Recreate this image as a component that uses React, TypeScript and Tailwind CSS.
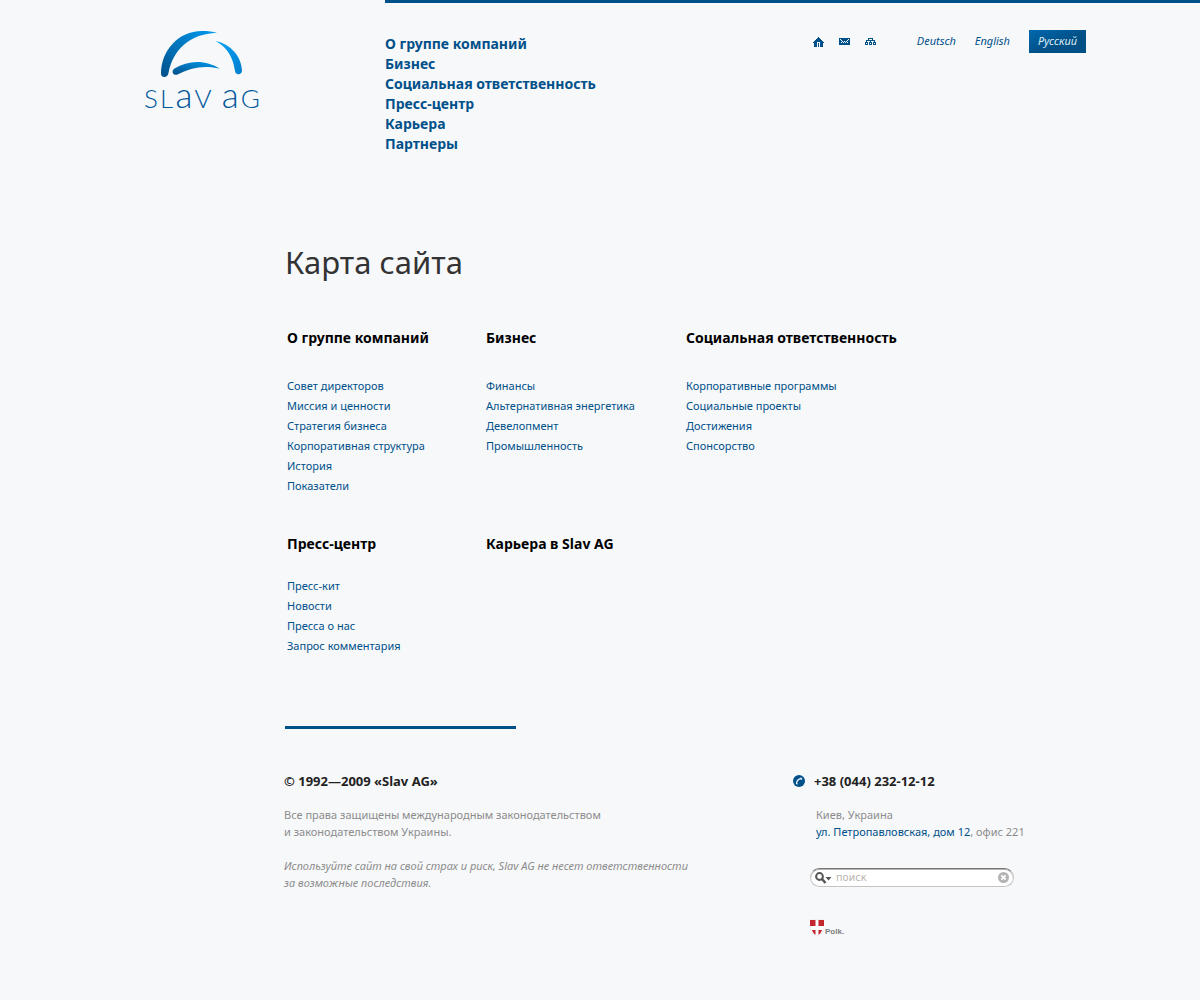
import React from "react";

const NAV = [
  "О группе компаний",
  "Бизнес",
  "Социальная ответственность",
  "Пресс-центр",
  "Карьера",
  "Партнеры",
];

const TOP_SECTIONS = [
  {
    title: "О группе компаний",
    links: [
      "Совет директоров",
      "Миссия и ценности",
      "Стратегия бизнеса",
      "Корпоративная структура",
      "История",
      "Показатели",
    ],
  },
  {
    title: "Бизнес",
    links: ["Финансы", "Альтернативная энергетика", "Девелопмент", "Промышленность"],
  },
  {
    title: "Социальная ответственность",
    links: ["Корпоративные программы", "Социальные проекты", "Достижения", "Спонсорство"],
  },
];

const BOTTOM_SECTIONS = [
  {
    title: "Пресс-центр",
    links: ["Пресс-кит", "Новости", "Пресса о нас", "Запрос комментария"],
  },
  { title: "Карьера в Slav AG", links: [] as string[] },
];

const HOME = [
  ".....#.....",
  "....###....",
  "...#####...",
  "..#######..",
  ".#########.",
  "####...####",
  ".###.#.###.",
  ".###.#.###.",
  ".###.#.###.",
  ".###.#.###.",
];
const MAIL = [
  "###########",
  "#.#######.#",
  "##.#####.##",
  "###.#.#.###",
  "##.#.#.#.##",
  "###########",
  "###########",
];
const TREE = [
  "...#####...",
  "...#...#...",
  ".#########.",
  ".#...#...#.",
  "###.###.###",
  "#.#.#.#.#.#",
  "###.###.###",
];

function PixelIcon({ rows }: { rows: string[] }) {
  const d = rows
    .map((row, y) =>
      row
        .split("")
        .map((c, x) => (c === "#" ? `M${x} ${y}h1v1h-1z` : ""))
        .join("")
    )
    .join("");
  return (
    <svg
      width={11}
      height={rows.length}
      shapeRendering="crispEdges"
      className="block"
      aria-hidden="true"
    >
      <path d={d} fill="#00508a" />
    </svg>
  );
}

function Logo() {
  return (
    <a href="#" aria-label="Slav AG" className="block w-[116px]">
      <svg viewBox="0 0 116 48" className="block h-[48px] w-[116px]" aria-hidden="true">
        <defs>
          <linearGradient id="arcLeft" x1="0" y1="1" x2="1" y2="0">
            <stop offset="0" stopColor="#00508a" />
            <stop offset="1" stopColor="#009bf0" />
          </linearGradient>
          <linearGradient id="arcRight" x1="0" y1="0" x2="1" y2="1">
            <stop offset="0" stopColor="#0aa2f8" />
            <stop offset="1" stopColor="#007fce" />
          </linearGradient>
        </defs>
        <path
          d="M17 44C17 21 34 1 58 1C64 1 69 1.5 73 2.800C45 4 29 20 24.500 43C23.800 48.500 17 48 17 44Z"
          fill="url(#arcLeft)"
        />
        <path
          d="M71.500 11C87 14 97.500 27 98 40.500C98 45.500 91.500 45.500 91 41C89 27 83 17 71.500 11Z"
          fill="url(#arcRight)"
        />
        <path
          d="M30.500 38.500C44 30 62 29.500 76 38.800C60 34.500 46 38 33.500 44.500C29.500 46 26.500 41.500 30.500 38.500Z"
          fill="url(#arcLeft)"
        />
      </svg>
      <span className="flex items-baseline justify-between font-['Lato'] text-[26px] leading-8 font-light text-[#00579a]">
        <span>S</span>
        <span>L</span>
        <span className="text-[35px]">a</span>
        <span>V</span>
        <span className="ml-2 text-[35px]">a</span>
        <span>G</span>
      </span>
    </a>
  );
}

function Section({ title, links, gap }: { title: string; links: string[]; gap: string }) {
  return (
    <section>
      <h2 className="text-[14px] leading-5 font-bold whitespace-nowrap text-black">{title}</h2>
      <ul className={gap}>
        {links.map((l) => (
          <li key={l} className="h-5 text-[11px] leading-5 whitespace-nowrap">
            <a href="#" className="text-[#00508a]">
              {l}
            </a>
          </li>
        ))}
      </ul>
    </section>
  );
}

export default function App() {
  return (
    <div className="min-h-screen bg-[#f7f8fa] pb-14 font-['Noto_Sans','Liberation_Sans',sans-serif]">
      <header className="flex">
        <div className="w-[385px] shrink-0 pt-[30px] pl-[144px]">
          <Logo />
        </div>
        <div className="flex grow items-start justify-between border-t-[3px] border-[#00508a] pr-[114px]">
          <nav className="pt-[31px]">
            <ul>
              {NAV.map((n) => (
                <li key={n} className="text-[14px] leading-5 font-bold">
                  <a href="#" className="text-[#00508a]">
                    {n}
                  </a>
                </li>
              ))}
            </ul>
          </nav>
          <div className="flex items-center pt-[27px] text-[11px] text-[#00508a] italic">
            <div className="mr-[41px] flex items-center gap-[15px]">
              <a href="#" aria-label="Главная">
                <PixelIcon rows={HOME} />
              </a>
              <a href="#" aria-label="Почта">
                <PixelIcon rows={MAIL} />
              </a>
              <a href="#" aria-label="Карта сайта">
                <PixelIcon rows={TREE} />
              </a>
            </div>
            <a href="#" className="mr-[19px]">
              Deutsch
            </a>
            <a href="#" className="mr-[19px]">
              English
            </a>
            <a
              href="#"
              className="flex h-[23px] w-[57px] items-center justify-center bg-linear-to-br from-[#0069ae] to-[#004f85] to-60% text-[#dcebf5]"
            >
              Русский
            </a>
          </div>
        </div>
      </header>

      <main className="pt-[82px] pl-[285px]">
        <h1 className="text-[31px] leading-[52px] text-[#333]">Карта сайта</h1>
        <div className="mt-10 grid grid-cols-[199px_200px_1fr] pl-[2px]">
          {TOP_SECTIONS.map((s) => (
            <Section key={s.title} {...s} gap="mt-7" />
          ))}
        </div>
        <div className="mt-[38px] grid grid-cols-[199px_200px_1fr] pl-[2px]">
          {BOTTOM_SECTIONS.map((s) => (
            <Section key={s.title} {...s} gap="mt-[22px]" />
          ))}
        </div>
        <div className="mt-[70px] h-[3px] w-[231px] bg-[#00508a]" />
      </main>

      <footer className="flex pt-[42px] pl-[284px] text-[11px] leading-[17px] text-[#8c8c8c]">
        <div className="w-[509px] shrink-0">
          <p className="text-[13px] leading-5 font-bold text-[#222]">© 1992—2009 «Slav AG»</p>
          <p className="mt-[15px]">
            Все права защищены международным законодательством
            <br />и законодательством Украины.
          </p>
          <p className="mt-[17px] italic">
            Используйте сайт на свой страх и риск, Slav AG не несет ответственности
            <br />
            за возможные последствия.
          </p>
        </div>
        <div>
          <p className="flex items-center gap-[9px] text-[13px] leading-5 font-bold text-[#222]">
            <svg width="12" height="12" viewBox="0 0 12 12" aria-hidden="true">
              <circle cx="6" cy="6" r="6" fill="#00508a" />
              <path
                d="M3.500 9C3.500 6 5 4 8.500 3.500M3 8L4.500 9.200M7.500 2.800L9 4.500"
                fill="none"
                stroke="#e6f0f7"
                strokeWidth="1.300"
              />
            </svg>
            +38 (044) 232-12-12
          </p>
          <address className="mt-[15px] pl-[23px] whitespace-nowrap not-italic">
            Киев, Украина
            <br />
            <a href="#" className="text-[#00508a]">
              ул. Петропавловская, дом 12
            </a>
            , офис 221
          </address>
          <form
            className="mt-7 ml-[17px] flex h-[19px] w-[204px] items-center rounded-full border border-[#c4c4c4] border-t-[#777] bg-white px-1 shadow-[inset_0_1px_0_#b5b5b5]"
            onSubmit={(e) => e.preventDefault()}
          >
            <button type="submit" aria-label="Найти" className="shrink-0">
              <svg width="17" height="12" viewBox="0 0 17 12" className="block" aria-hidden="true">
                <circle cx="4.500" cy="4.500" r="3.400" fill="none" stroke="#555" strokeWidth="2" />
                <path d="M7 7L10.500 11" stroke="#555" strokeWidth="2.500" />
                <path d="M10.500 5H16.500L13.500 8.500Z" fill="#555" />
              </svg>
            </button>
            <input
              type="text"
              aria-label="Поиск"
              placeholder="поиск"
              className="ml-1 w-0 min-w-0 grow bg-transparent font-['DejaVu_Sans'] text-[10px] leading-4 outline-none placeholder:text-[#b9b3ad]"
            />
            <button type="reset" aria-label="Очистить" className="shrink-0">
              <svg width="11" height="11" viewBox="0 0 11 11" className="block" aria-hidden="true">
                <circle cx="5.500" cy="5.500" r="5.500" fill="#b3b3b3" />
                <path d="M3.300 3.300L7.700 7.700M7.700 3.300L3.300 7.700" stroke="#fff" strokeWidth="1.800" />
              </svg>
            </button>
          </form>
          <a href="#" className="mt-8 ml-[17px] flex items-end gap-px">
            <svg width="14" height="17" viewBox="0 0 14 17" aria-hidden="true">
              <path d="M0 1H14V8C14 12 11 15 7 17C3 15 0 12 0 8Z" fill="#fff" stroke="#e8d4d6" strokeWidth="0.500" />
              <path d="M0 1H5.500V7H0ZM8.500 1H14V7H8.500ZM2 11H5.500V15.800C4 15 2.500 13 2 11ZM8.500 11H12C11.500 13 10 15 8.500 15.800Z" fill="#c4262e" />
            </svg>
            <span className="font-['Liberation_Sans'] text-[8px] leading-[9px] font-bold text-[#7d7d7d]">
              Polk.
            </span>
          </a>
        </div>
      </footer>
    </div>
  );
}
